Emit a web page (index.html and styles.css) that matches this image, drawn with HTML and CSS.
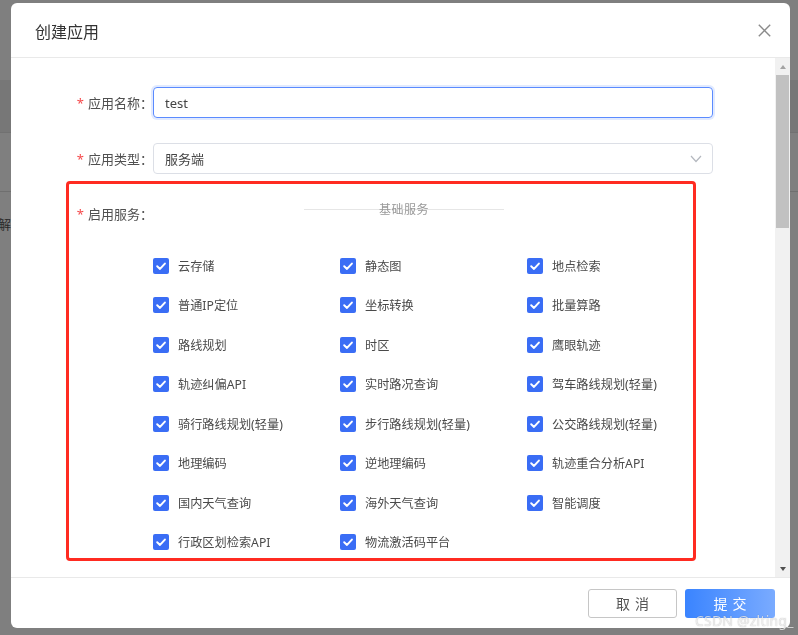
FILE: index.html
```html
<!DOCTYPE html>
<html lang="zh-CN">
<head>
<meta charset="utf-8">
<title>创建应用</title>
<link rel="stylesheet" href="styles.css">
</head>
<body>
<div class="page">
  <div class="page-top"></div>
  <div class="page-band"></div>
  <div class="page-row"></div>
  <div class="page-text-row"><span class="page-text">解析</span></div>
</div>
<div class="mask">
  <div class="modal">
    <div class="modal-header">
      <span class="modal-title">创建应用</span>
      <span class="modal-close">
        <svg width="13" height="13" viewBox="0 0 13 13"><path d="M0.8 0.8 L12.2 12.2 M12.2 0.8 L0.8 12.2" stroke="#8a8a8a" stroke-width="1.4" fill="none"/></svg>
      </span>
    </div>
    <div class="modal-body">
      <div class="modal-content">
        <div class="form-item">
          <label class="form-label"><span class="req">*</span>应用名称：</label>
          <div class="input input-focus">test</div>
        </div>
        <div class="form-item">
          <label class="form-label"><span class="req">*</span>应用类型：</label>
          <div class="input select">
            <span>服务端</span>
            <svg class="chev" width="12" height="8" viewBox="0 0 12 8"><path d="M1 1 L6 6.5 L11 1" stroke="#b4b8bf" stroke-width="1.2" fill="none"/></svg>
          </div>
        </div>
        <div class="service-box">
          <label class="form-label box-label"><span class="req">*</span>启用服务：</label>
          <div class="services">
            <div class="divider"><span class="divider-text">基础服务</span></div>
            <div class="check-grid">
              <div class="check"><span class="cb"></span><span>云存储</span></div>
              <div class="check"><span class="cb"></span><span>静态图</span></div>
              <div class="check"><span class="cb"></span><span>地点检索</span></div>
              <div class="check"><span class="cb"></span><span>普通IP定位</span></div>
              <div class="check"><span class="cb"></span><span>坐标转换</span></div>
              <div class="check"><span class="cb"></span><span>批量算路</span></div>
              <div class="check"><span class="cb"></span><span>路线规划</span></div>
              <div class="check"><span class="cb"></span><span>时区</span></div>
              <div class="check"><span class="cb"></span><span>鹰眼轨迹</span></div>
              <div class="check"><span class="cb"></span><span>轨迹纠偏API</span></div>
              <div class="check"><span class="cb"></span><span>实时路况查询</span></div>
              <div class="check"><span class="cb"></span><span>驾车路线规划(轻量)</span></div>
              <div class="check"><span class="cb"></span><span>骑行路线规划(轻量)</span></div>
              <div class="check"><span class="cb"></span><span>步行路线规划(轻量)</span></div>
              <div class="check"><span class="cb"></span><span>公交路线规划(轻量)</span></div>
              <div class="check"><span class="cb"></span><span>地理编码</span></div>
              <div class="check"><span class="cb"></span><span>逆地理编码</span></div>
              <div class="check"><span class="cb"></span><span>轨迹重合分析API</span></div>
              <div class="check"><span class="cb"></span><span>国内天气查询</span></div>
              <div class="check"><span class="cb"></span><span>海外天气查询</span></div>
              <div class="check"><span class="cb"></span><span>智能调度</span></div>
              <div class="check"><span class="cb"></span><span>行政区划检索API</span></div>
              <div class="check"><span class="cb"></span><span>物流激活码平台</span></div>
            </div>
          </div>
        </div>
      </div>
      <div class="scrollbar">
        <div class="sb-btn"><span class="tri-up"></span></div>
        <div class="sb-track"><div class="sb-thumb"></div></div>
        <div class="sb-btn"><span class="tri-down"></span></div>
      </div>
    </div>
    <div class="modal-footer">
      <button class="btn btn-cancel">取消</button>
      <button class="btn btn-primary">提交</button>
    </div>
  </div>
  <div class="watermark">CSDN @zlting_</div>
</div>
</body>
</html>
```
FILE: styles.css
```css
* { box-sizing: border-box; }
html, body { margin: 0; padding: 0; }
body {
  width: 798px;
  height: 635px;
  overflow: hidden;
  background: #fff;
  font-family: "Noto Sans", "Noto Sans CJK SC", sans-serif;
  color: #555;
}

/* page behind the mask */
.page { width: 798px; }
.page-top { height: 80px; }
.page-band { height: 53px; background: #eeeeee; border-bottom: 1px solid #e2e2e2; }
.page-row { height: 59px; border-bottom: 1px solid #dedede; }
.page-text-row { height: 60px; padding-top: 20px; }
.page-text { font-size: 13px; color: #555; margin-left: -2px; font-family: "Noto Sans CJK SC", sans-serif; }

.mask {
  position: fixed;
  inset: 0;
  background: rgba(0, 0, 0, 0.5);
}

.modal {
  position: absolute;
  left: 11px;
  top: 3px;
  width: 779px;
  height: 625px;
  background: #fff;
  border-radius: 6px;
  overflow: hidden;
  display: flex;
  flex-direction: column;
}

.modal-header {
  height: 55px;
  flex: none;
  border-bottom: 1px solid #e9e9e9;
  display: flex;
  align-items: center;
  justify-content: space-between;
  padding: 0 19px 0 24px;
}
.modal-title {
  font-size: 16px;
  color: #333;
  font-family: "Noto Sans CJK SC", sans-serif;
  line-height: 20px;
  margin-top: 1px;
}
.modal-close { display: flex; width: 13px; height: 13px; }

.modal-body {
  height: 519px;
  flex: none;
  display: flex;
}
.modal-content {
  flex: 1;
  overflow: hidden;
  padding: 29px 62px 0 55px;
}

.form-item {
  display: flex;
  align-items: center;
  margin-bottom: 25px;
}
.form-item + .form-item { margin-bottom: 7px; }
.form-label {
  width: 87px;
  flex: none;
  text-align: right;
  font-size: 13px;
  color: #505050;
  font-family: "Noto Sans CJK SC", sans-serif;
  line-height: 20px;
  white-space: nowrap;
}
.req { color: #f5484a; margin-right: 4px; font-family: "Noto Sans", sans-serif; }

.input {
  flex: 1;
  height: 31px;
  border: 1px solid #dcdfe6;
  border-radius: 4px;
  padding: 0 11px;
  font-size: 13px;
  color: #444;
  display: flex;
  align-items: center;
  font-family: "Noto Sans", "Noto Sans CJK SC", sans-serif;
}
.input-focus {
  border-color: #5b8bff;
  box-shadow: 0 0 0 2px rgba(91, 139, 255, 0.18);
}
.select { justify-content: space-between; padding-right: 10px; font-family: "Noto Sans CJK SC", sans-serif; }
.chev { display: block; }

.service-box {
  width: 630px;
  border: 3px solid #ff2b21;
  border-radius: 4px;
  display: flex;
  align-items: flex-start;
  padding: 15px 0 8px;
}
.box-label { width: 84px; line-height: 30px; }
.services { flex: 1; }

.divider {
  width: 200px;
  margin-left: 151px;
  height: 20px;
  display: flex;
  align-items: center;
  justify-content: center;
  background: linear-gradient(#e6e6e6, #e6e6e6) center / 100% 1px no-repeat;
}
.divider-text {
  font-size: 12px;
  color: #999;
  font-family: "Noto Sans CJK SC", sans-serif;
  line-height: 16px;
  letter-spacing: 0.5px;
}

.check-grid {
  margin-top: 39px;
  display: grid;
  grid-template-columns: repeat(3, 187px);
  row-gap: 23.45px;
}
.check {
  display: flex;
  align-items: center;
  height: 16px;
  font-size: 12.2px;
  color: #4a4a4a;
  font-family: "Noto Sans", "Noto Sans CJK SC", sans-serif;
  white-space: nowrap;
}
.cb {
  width: 16px;
  height: 16px;
  flex: none;
  margin-right: 9px;
  border-radius: 2px;
  background: #3a6df5 url("data:image/svg+xml,%3Csvg xmlns='http://www.w3.org/2000/svg' width='16' height='16'%3E%3Cpath d='M4.2 8.3 L7 10.9 L11.9 5.6' stroke='white' stroke-width='2' fill='none' stroke-linecap='round' stroke-linejoin='round'/%3E%3C/svg%3E") center / 16px 16px no-repeat;
}

.scrollbar {
  width: 15px;
  flex: none;
  background: #f1f1f1;
  display: flex;
  flex-direction: column;
}
.sb-btn {
  height: 17px;
  flex: none;
  display: flex;
  align-items: center;
  justify-content: center;
}
.tri-up {
  width: 0; height: 0;
  border-left: 3.5px solid transparent;
  border-right: 3.5px solid transparent;
  border-bottom: 4px solid #a3a3a3;
}
.tri-down {
  width: 0; height: 0;
  border-left: 3.5px solid transparent;
  border-right: 3.5px solid transparent;
  border-top: 4px solid #505050;
}
.sb-track { flex: 1; padding: 0 1px 0 1px; }
.sb-thumb { height: 153px; background: #c1c1c1; }

.modal-footer {
  flex: 1;
  border-top: 1px solid #e9e9e9;
  display: flex;
  align-items: center;
  justify-content: flex-end;
  gap: 8px;
  padding: 0 15px 0 0;
}
.btn {
  height: 29px;
  width: 89px;
  border-radius: 3px;
  font-size: 14px;
  font-family: "Noto Sans CJK SC", sans-serif;
  letter-spacing: 5px;
  padding: 0 0 0 5px;
  cursor: pointer;
}
.btn-cancel { background: #fff; border: 1px solid #c6c6c6; color: #555; }
.btn-primary {
  width: 90px;
  border: none;
  color: #fff;
  background: linear-gradient(90deg, #3a84ff, #7aabff);
}

.watermark {
  position: absolute;
  left: 695px;
  top: 611px;
  font-size: 14px;
  font-family: "Noto Sans", sans-serif;
  color: rgba(255, 255, 255, 0.75);
  text-shadow: 0 0 1px rgba(0, 0, 0, 0.35);
  letter-spacing: 0.2px;
}
```
